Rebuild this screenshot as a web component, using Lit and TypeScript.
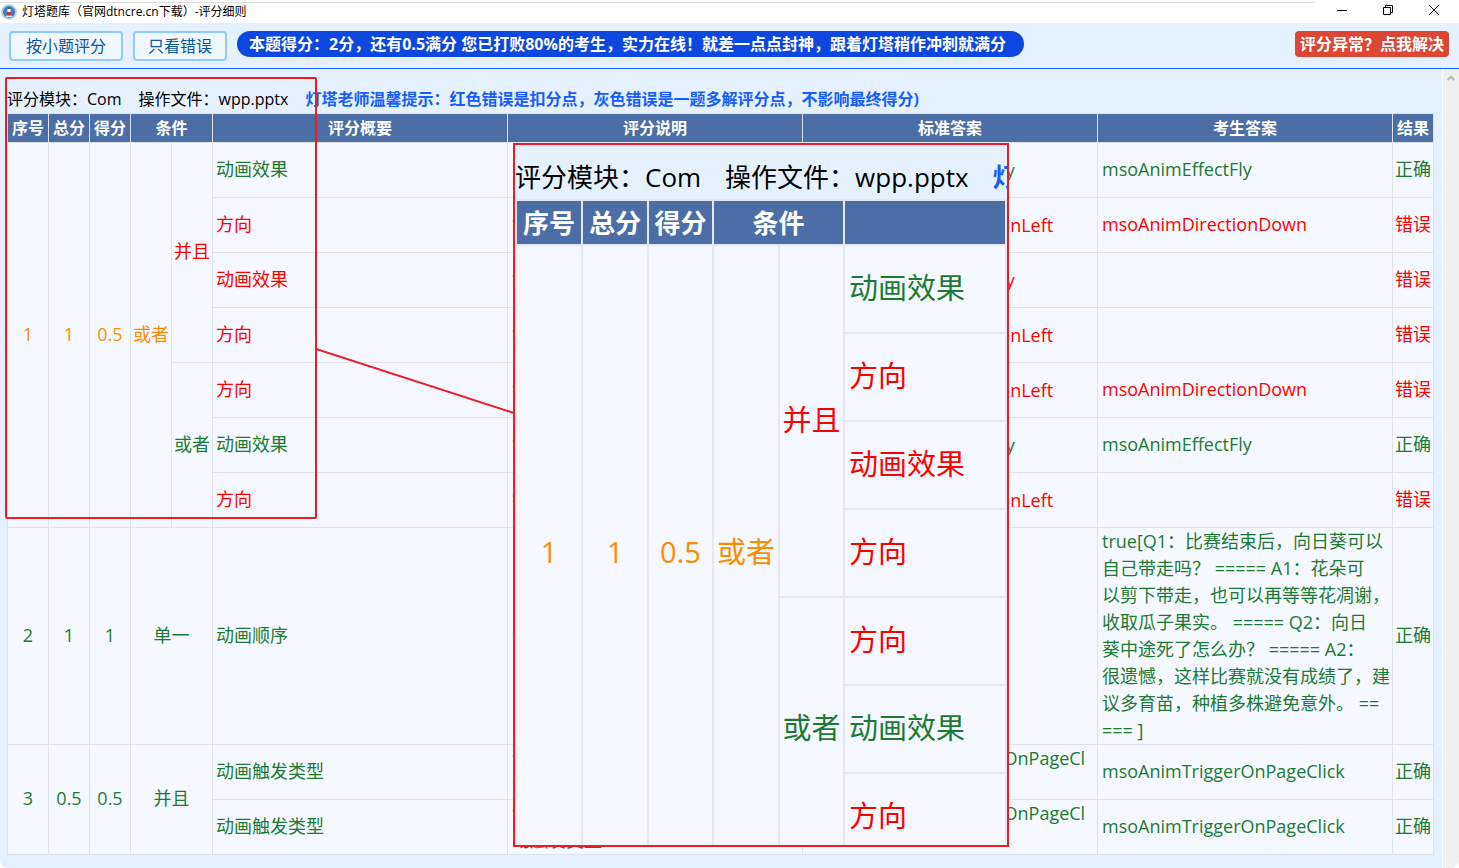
import { LitElement, html, css, nothing } from "lit";
import { customElement } from "lit/decorators.js";

type Tone = "ok" | "bad" | "part";

interface Span {
  text: string;
  rows: number;
  tone: Tone;
  wide?: boolean;
}

interface Row {
  lead?: Span[];
  cond?: Span;
  sub?: Span;
  name: string;
  note: string;
  standard: string;
  answer: string[];
  ok: boolean;
}

const FLY = "等于：msoAnimEffectFly";
const LEFT = "等于：msoAnimDirectionLeft";
const CLICK = "等于：msoAnimTriggerOnPageClick";
const NOTE_FX = "错误或正确的动画效果";
const NOTE_DIR = "错误或正确的动画方向";
const NOTE_TRIGGER = "设置对象动画的触发类型评分点为动触发类型";

const lead = (values: string[], rows: number, tone: Tone): Span[] =>
  values.map((text) => ({ text, rows, tone }));

const ROWS: Row[] = [
  {
    lead: lead(["1", "1", "0.5"], 7, "part"),
    cond: { text: "或者", rows: 7, tone: "part" },
    sub: { text: "并且", rows: 4, tone: "bad" },
    name: "动画效果", note: NOTE_FX, standard: FLY, answer: ["msoAnimEffectFly"], ok: true,
  },
  { name: "方向", note: NOTE_DIR, standard: LEFT, answer: ["msoAnimDirectionDown"], ok: false },
  { name: "动画效果", note: NOTE_FX, standard: FLY, answer: [], ok: false },
  { name: "方向", note: NOTE_DIR, standard: LEFT, answer: [], ok: false },
  {
    sub: { text: "或者", rows: 3, tone: "ok" },
    name: "方向", note: NOTE_DIR, standard: LEFT, answer: ["msoAnimDirectionDown"], ok: false,
  },
  { name: "动画效果", note: NOTE_FX, standard: FLY, answer: ["msoAnimEffectFly"], ok: true },
  { name: "方向", note: NOTE_DIR, standard: LEFT, answer: [], ok: false },
  {
    lead: lead(["2", "1", "1"], 1, "ok"),
    cond: { text: "单一", rows: 1, tone: "ok", wide: true },
    name: "动画顺序", note: "动画顺序", standard: "",
    answer: [
      "true[Q1：比赛结束后，向日葵可以",
      "自己带走吗？ ===== A1：花朵可",
      "以剪下带走，也可以再等等花凋谢，",
      "收取瓜子果实。 ===== Q2：向日",
      "葵中途死了怎么办？ ===== A2：",
      "很遗憾，这样比赛就没有成绩了，建",
      "议多育苗，种植多株避免意外。 ==",
      "=== ]",
    ],
    ok: true,
  },
  {
    lead: lead(["3", "0.5", "0.5"], 2, "ok"),
    cond: { text: "并且", rows: 2, tone: "ok", wide: true },
    name: "动画触发类型", note: NOTE_TRIGGER, standard: CLICK, answer: ["msoAnimTriggerOnPageClick"], ok: true,
  },
  { name: "动画触发类型", note: NOTE_TRIGGER, standard: CLICK, answer: ["msoAnimTriggerOnPageClick"], ok: true },
];

const spanCell = (s: Span) => html`
  <td class="mid ${s.tone}" rowspan=${s.rows} colspan=${s.wide ? 2 : 1}>${s.text}</td>
`;

const leadCells = (r: Row) => html`
  ${r.lead?.map(spanCell) ?? nothing}
  ${r.cond ? spanCell(r.cond) : nothing}
  ${r.sub ? spanCell(r.sub) : nothing}
`;

const gridStyles = css`
  table {
    width: 100%;
    table-layout: fixed;
    border-collapse: collapse;
    background: #f5f8ff;
  }
  th,
  td {
    box-sizing: border-box;
    border: 1px solid #dfe4ea;
    padding: 0;
    font-weight: 400;
  }
  th {
    background: #4a6ea5;
    color: #fff;
    font-weight: 700;
    white-space: nowrap;
  }
  .mid { padding-bottom: 2px; text-align: center; white-space: nowrap; }
  .ok { color: #1c7a35; }
  .bad { color: #ff0000; }
  .part { color: #ff8c00; }
`;

@customElement("score-table")
export class ScoreTable extends LitElement {
  static styles = [
    gridStyles,
    css`
      :host { display: block; }
      .narrow { width: 41px; }
      th { height: 29px; font-size: 16px; line-height: 24px; }
      td { height: 55px; font-size: 18px; line-height: 27px; }
      .name { padding: 0 3px 2px; }
      .text { padding: 0 4px; word-break: break-all; }
      .standard { padding: 0 10px 0 8px; word-break: break-all; }
      .answer { padding: 0 0 0 4px; white-space: nowrap; }
      .single { padding-bottom: 2px; }
      .line { display: block; }
    `,
  ];

  render() {
    return html`
      <table>
        <colgroup>
          ${[1, 2, 3, 4, 5].map(() => html`<col class="narrow" />`)}
          <col /><col /><col /><col />
          <col class="narrow" />
        </colgroup>
        <thead>
          <tr>
            <th>序号</th><th>总分</th><th>得分</th><th colspan="2">条件</th>
            <th>评分概要</th><th>评分说明</th><th>标准答案</th><th>考生答案</th><th>结果</th>
          </tr>
        </thead>
        <tbody>
          ${ROWS.map((r) => {
            const tone = r.ok ? "ok" : "bad";
            const single = r.answer.length === 1 ? "single" : "";
            return html`
              <tr>
                ${leadCells(r)}
                <td class="name ${tone}">${r.name}</td>
                <td class="text ${tone}">${r.note}</td>
                <td class="standard ${tone}">${r.standard}</td>
                <td class="answer ${single} ${tone}">
                  ${r.answer.map((l) => html`<span class="line">${l}</span>`)}
                </td>
                <td class="mid ${tone}">${r.ok ? "正确" : "错误"}</td>
              </tr>
            `;
          })}
        </tbody>
      </table>
    `;
  }
}

@customElement("zoom-card")
export class ZoomCard extends LitElement {
  static styles = [
    gridStyles,
    css`
      :host {
        display: flex;
        flex-direction: column;
        box-sizing: border-box;
        overflow: hidden;
        border: 2px solid #ed1c24;
        background: #e5f1ff;
        color: #000;
        white-space: nowrap;
      }
      .head {
        display: flex;
        gap: 24px;
        padding: 13px 0 3px;
        font-size: 26px;
        line-height: 38px;
      }
      .tip { color: #165dff; font-weight: 700; }
      .narrow { width: 66px; }
      .slim { width: 65px; }
      th,
      td { border: 2px solid #e5e8ed; }
      th { height: 45px; font-size: 26px; line-height: 38px; }
      td { height: 88px; font-size: 29px; line-height: 44px; }
      .text { padding: 0 4px 2px; }
    `,
  ];

  render() {
    return html`
      <div class="head">
        <span>评分模块：Com</span><span>操作文件：wpp.pptx</span><span class="tip">灯</span>
      </div>
      <table>
        <colgroup>
          <col class="narrow" /><col class="narrow" /><col class="slim" />
          <col class="narrow" /><col class="slim" /><col />
        </colgroup>
        <thead>
          <tr><th>序号</th><th>总分</th><th>得分</th><th colspan="2">条件</th><th></th></tr>
        </thead>
        <tbody>
          ${ROWS.slice(0, 7).map(
            (r) => html`
              <tr>
                ${leadCells(r)}
                <td class="text ${r.ok ? "ok" : "bad"}">${r.name}</td>
              </tr>
            `,
          )}
        </tbody>
      </table>
    `;
  }
}

@customElement("app-root")
export class AppRoot extends LitElement {
  static styles = css`
    :host {
      display: flex;
      flex-direction: column;
      position: relative;
      box-sizing: border-box;
      min-height: 100vh;
      overflow: hidden;
      font-family: "Open Sans", "Noto Sans CJK SC", sans-serif;
      font-size: 16px;
      line-height: 24px;
      color: #000;
      background: #fff;
    }
    button { font: inherit; margin: 0; cursor: pointer; white-space: nowrap; }
    .titlebar {
      display: flex;
      align-items: center;
      height: 23px;
      font-size: 12px;
      line-height: 16px;
      background: linear-gradient(#dedede, #dedede) 0 2px / calc(100% - 144px) 1px no-repeat;
    }
    .logo { width: 16px; height: 16px; margin: 0 5px 0 1px; }
    .title { flex: 1; white-space: nowrap; }
    .win {
      display: grid;
      place-items: center;
      width: 46px;
      height: 20px;
      padding: 0;
      border: 0;
      background: none;
    }
    .wins { display: flex; align-self: flex-start; margin-right: 2px; }
    .toolbar {
      display: flex;
      align-items: flex-start;
      gap: 10px;
      padding: 8px 10px 7px 9px;
      background: #e5f1ff;
      border-bottom: 1px solid #165dff;
    }
    .filter {
      height: 30px;
      padding: 0 13px;
      border: 2px solid #91caff;
      border-radius: 4px;
      background: #f0f8ff;
      color: #0b559f;
      line-height: 26px;
    }
    .wide { min-width: 114px; }
    .pill {
      padding: 0 18px 0 12px;
      border-radius: 13px;
      background: #0d47e0;
      color: #fff;
      font-weight: 700;
      line-height: 26px;
      white-space: nowrap;
    }
    .alert {
      margin-left: auto;
      padding: 0 5px;
      border: 0;
      border-radius: 4px;
      background: #dd4632;
      color: #fff;
      font-weight: 700;
      line-height: 26px;
    }
    .body { display: flex; flex: 1; background: #e5f1ff; border-radius: 0 0 8px 8px; overflow: hidden; }
    .content { flex: 1; min-width: 0; padding: 18px 8px 13px 7px; }
    .info { display: flex; gap: 17px; padding-bottom: 2px; white-space: nowrap; }
    .tip { color: #165dff; font-weight: 700; }
    .scroll {
      width: 16px;
      padding-top: 6px;
      border-left: 1px solid #fff;
      background: #f0f0f0;
      text-align: center;
      line-height: 0;
    }
    .frame {
      position: absolute;
      left: 5px;
      top: 77px;
      width: 312px;
      height: 442px;
      box-sizing: border-box;
      border: 2px solid #ed1c24;
      border-radius: 2px;
      pointer-events: none;
    }
    .link {
      position: absolute;
      left: 316px;
      top: 347px;
      pointer-events: none;
    }
    .card {
      position: absolute;
      left: 513px;
      top: 143px;
      width: 496px;
      height: 704px;
    }
  `;

  render() {
    return html`
      <header class="titlebar">
        <svg class="logo" viewBox="0 0 16 16" aria-hidden="true">
          <circle cx="8" cy="8" r="7.8" fill="#b4cbe0" />
          <circle cx="8" cy="8" r="5.8" fill="#2467a5" />
          <circle cx="8" cy="8" r="4.9" fill="#3389c2" />
          <path d="M7 3.6h2v1.2H7z" fill="#7a3f5a" />
          <path d="M6.5 5h3v3h-3z" fill="#fff" />
          <path d="M6.3 8h3.4l.7 3.6H5.6z" fill="#e0252b" />
          <path d="M5 11.6h6V13H5z" fill="#dbeaf5" />
        </svg>
        <span class="title">灯塔题库（官网dtncre.cn下载）-评分细则</span>
        <div class="wins">
          <button class="win" aria-label="最小化">
            <svg width="10" height="10" viewBox="0 0 10 10"><path d="M0 5.5h10" stroke="#000" /></svg>
          </button>
          <button class="win" aria-label="还原">
            <svg width="10" height="10" viewBox="0 0 10 10" fill="none" stroke="#000">
              <path d="M.5 2.5h7v7h-7zM2.5 2.5v-2h7v7h-2" />
            </svg>
          </button>
          <button class="win" aria-label="关闭">
            <svg width="10" height="10" viewBox="0 0 10 10"><path d="M0 0l10 10M10 0 0 10" stroke="#000" /></svg>
          </button>
        </div>
      </header>
      <nav class="toolbar">
        <button class="filter wide">按小题评分</button>
        <button class="filter">只看错误</button>
        <span class="pill">本题得分：2分，还有0.5满分 您已打败80%的考生，实力在线！就差一点点封神，跟着灯塔稍作冲刺就满分</span>
        <button class="alert">评分异常？点我解决</button>
      </nav>
      <main class="body">
        <div class="content">
          <div class="info">
            <span>评分模块：Com</span>
            <span>操作文件：wpp.pptx</span>
            <span class="tip">灯塔老师温馨提示：红色错误是扣分点，灰色错误是一题多解评分点，不影响最终得分)</span>
          </div>
          <score-table></score-table>
        </div>
        <div class="scroll">
          <svg width="8" height="6" viewBox="0 0 8 6"><path d="M.7 5 4 1.7 7.3 5" fill="none" stroke="#b8b8b8" stroke-width="2" /></svg>
        </div>
      </main>
      <div class="frame"></div>
      <svg class="link" width="199" height="68" viewBox="0 0 199 68" aria-hidden="true">
        <path d="M0 2 198 66" stroke="#ed1c24" stroke-width="2" />
      </svg>
      <zoom-card class="card"></zoom-card>
    `;
  }
}
